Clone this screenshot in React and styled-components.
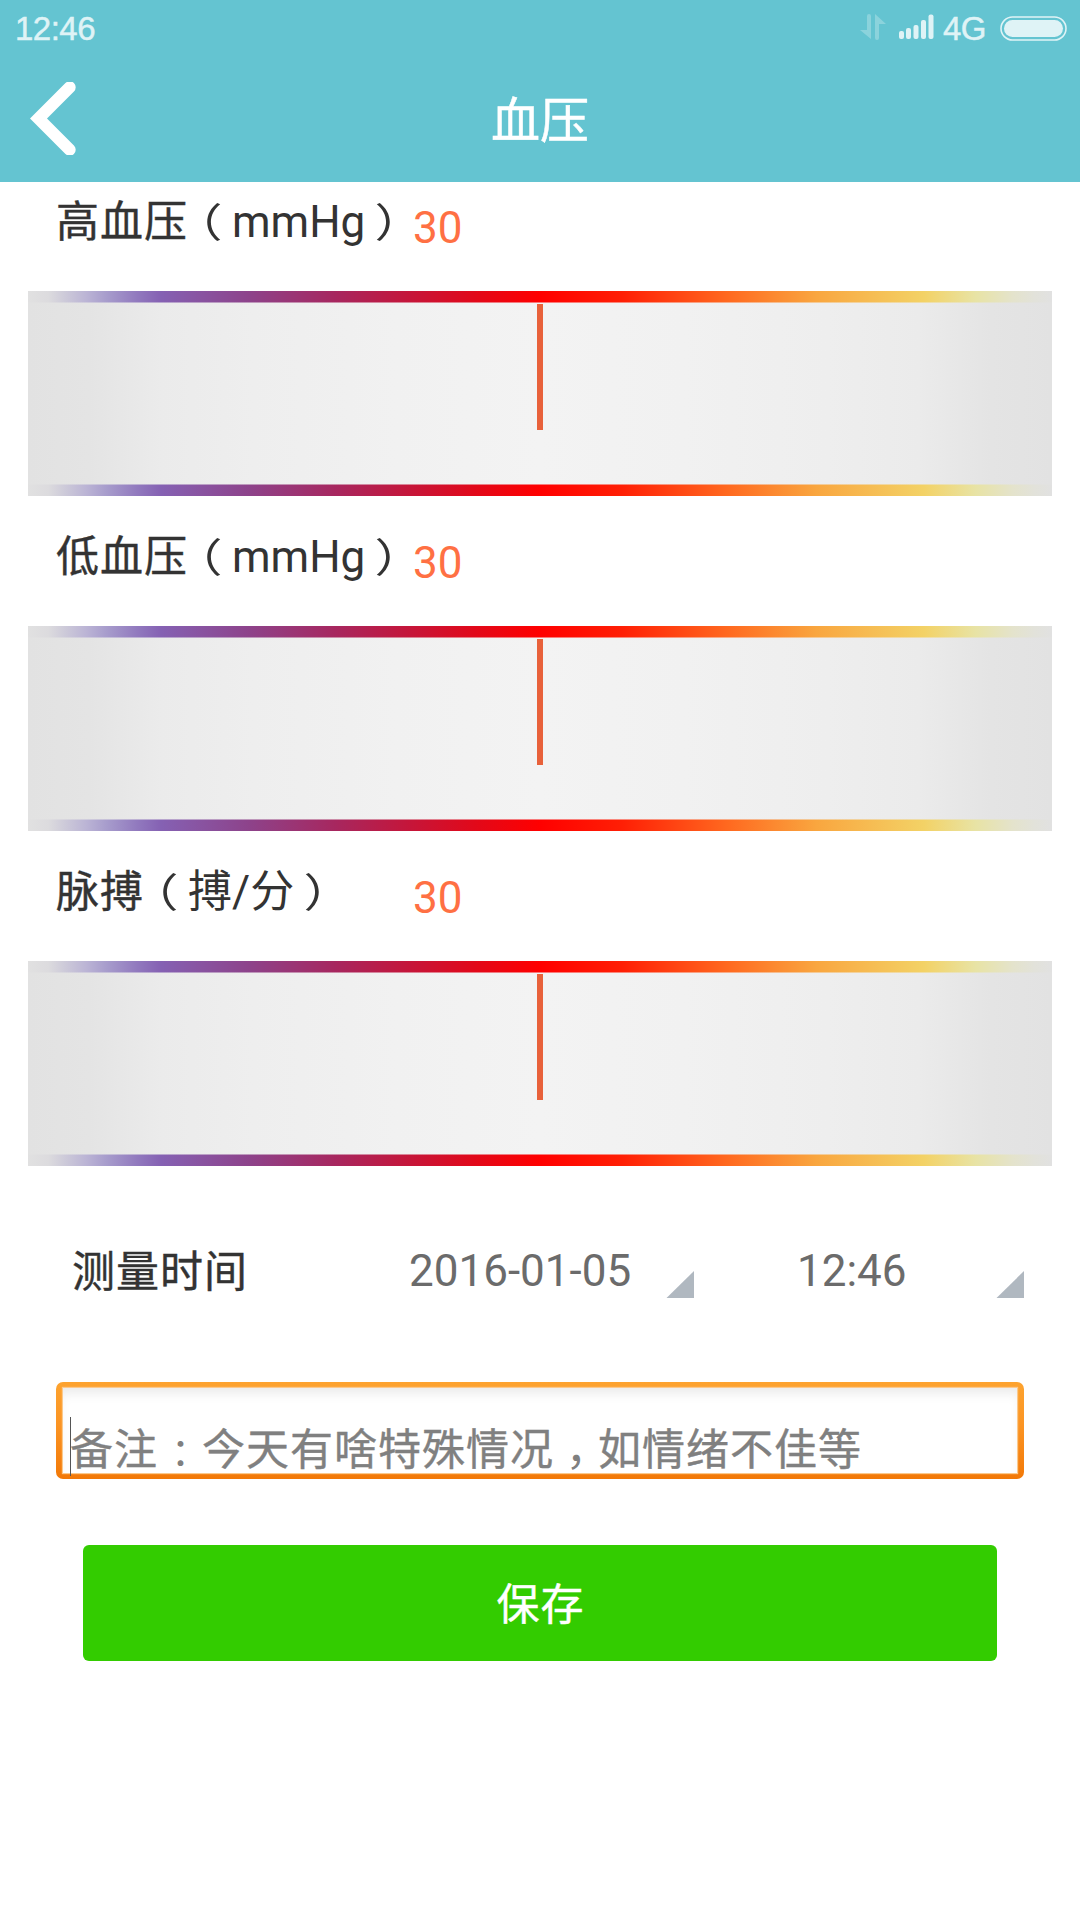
import React from "react";
import styled, { createGlobalStyle } from "styled-components";

const Global = createGlobalStyle`
  * { box-sizing: border-box; }
  body {
    margin: 0;
    background: #fff;
    font-family: Roboto, "Noto Sans CJK SC", sans-serif;
  }
`;

const Screen = styled.div`
  width: 1080px;
  height: 1920px;
  display: flex;
  flex-direction: column;
  background: #fff;
  overflow: hidden;
`;

const Header = styled.header`
  height: 182px;
  flex: none;
  background: #64c4d1;
`;

const StatusBar = styled.div`
  height: 56px;
  padding: 0 13px 0 15px;
  display: flex;
  align-items: center;
  justify-content: space-between;
  font: 33px/56px "Liberation Sans", Arial, sans-serif;
  letter-spacing: -0.5px;
  -webkit-text-stroke: 0.5px #dff3f6;
  color: #dff3f6;
`;

const Clock = styled.span`
  padding-top: 1px;
`;

const StatusIcons = styled.div`
  display: flex;
  align-items: center;
`;

const Network = styled.span`
  width: 57px;
  padding-top: 1px;
  text-align: left;
`;

const TitleBar = styled.div`
  height: 126px;
  display: grid;
  grid-template-columns: 90px 1fr 90px;
  align-items: center;
`;

const BackButton = styled.button`
  height: 126px;
  padding: 0 0 1px 30px;
  border: 0;
  background: none;
  display: flex;
  align-items: center;
`;

const Title = styled.h1`
  margin: 6px 0 0;
  font-size: 49px;
  line-height: 72px;
  font-weight: 400;
  text-align: center;
  color: #fff;
  -webkit-text-stroke: 0.5px #fff;
`;

const Reading = styled.section`
  height: 335px;
  flex: none;
  padding: 0 28px;
`;

const ReadingHead = styled.div`
  height: 109px;
  display: flex;
  padding-left: 28px;
`;

const Label = styled.div`
  width: 357px;
  height: 64px;
  margin-top: 8px;
  display: flex;
  font-size: 44px;
  line-height: 64px;
  color: #333;
  white-space: nowrap;
`;

const Han = styled.span`
  font-size: 43px;
  letter-spacing: 1px;
  -webkit-text-stroke: 0.4px currentColor;
`;

const Paren = styled.span`
  width: 44px;
  padding-top: 2px;
  display: flex;
  justify-content: center;
  font-size: 40px;
  font-feature-settings: "halt";
  transform: scaleX(1.25);
`;

const Value = styled.div`
  margin-top: 20px;
  font-size: 44px;
  line-height: 52px;
  color: #ff7043;
`;

const Gauge = styled.div`
  height: 205px;
  display: flex;
  flex-direction: column;
  align-items: center;
  background: linear-gradient(
    90deg,
    #e2e2e2 0%,
    #e4e4e4 6%,
    #ebebeb 13%,
    #eeeeee 22%,
    #f1f1f1 36%,
    #f3f3f3 50%,
    #f1f1f1 64%,
    #eeeeee 78%,
    #ebebeb 87%,
    #e4e4e4 94%,
    #e2e2e2 100%
  );
`;

const Spectrum = styled.div`
  width: 100%;
  height: 12px;
  flex: none;
  mask-image: linear-gradient(
    ${(p) => (p.$fade === "up" ? "0deg" : "180deg")},
    #000 11px,
    rgba(0, 0, 0, 0.5) 11px
  );
  background: linear-gradient(
    90deg,
    #e1e1e1 0%,
    #dcdbde 2%,
    #cdcad9 3.6%,
    #bbb4d5 5.7%,
    #a79ccc 7.7%,
    #9179be 10.7%,
    #8561b3 13%,
    #8d438b 21.5%,
    #a7275f 30%,
    #c4163b 37%,
    #e30818 44%,
    #ff0000 50%,
    #ff1f05 58%,
    #ff6a20 68.5%,
    #f9a63f 77%,
    #f3d266 87.5%,
    #e8e3a4 92.5%,
    #e4e3cc 96.2%,
    #e2e2da 98.3%,
    #e1e1e1 100%
  );
`;

const Needle = styled.div`
  width: 6px;
  height: 126px;
  margin: 1px 0 auto;
  background: #e8613a;
`;

const TimeRow = styled.div`
  height: 100px;
  margin: 33px 56px 0;
  padding-left: 16px;
  flex: none;
  display: grid;
  grid-template-columns: 336px 286px 44px 286px;
  font-size: 44px;
  line-height: 64px;
  color: #333;
`;

const RowLabel = styled.div`
  padding-top: 20px;
`;

const Picker = styled.div`
  height: 78px;
  display: flex;
  justify-content: space-between;
  align-items: flex-end;
  padding-left: ${(p) => p.$indent}px;
  color: #6b6b6b;
`;

const PickerValue = styled.span`
  height: 64px;
  line-height: 64px;
  margin-bottom: -5px;
`;

const Note = styled.div`
  height: 97px;
  margin: 62px 56px 0;
  padding: 6px 7px;
  flex: none;
  border-radius: 7px;
  background: linear-gradient(180deg, #fda32f 0%, #fb9423 45%, #f27807 100%);
`;

const NoteField = styled.div`
  height: 85px;
  padding: 29px 0 0 7px;
  display: flex;
  align-items: flex-start;
  background: #fff;
  box-shadow: inset 0 9px 12px -4px #eaeaea, 0 0 1px 1px #fbc98c;
  font-size: 44px;
  line-height: 66px;
  color: #808080;
  white-space: nowrap;
`;

const Caret = styled.i`
  width: 1px;
  height: 59px;
  margin-right: -1px;
  background: #555;
`;

const Mark = styled.span`
  width: 44px;
  padding: ${(p) => p.$drop || 0}px 0 0 1px;
  font-size: ${(p) => p.$size}px;
  text-align: center;
  font-feature-settings: "halt";
`;

const SaveButton = styled.button`
  height: 116px;
  margin: 66px 83px 0;
  padding: 4px 0 0 1px;
  flex: none;
  border: 0;
  border-radius: 6px;
  background: #33cc00;
  color: #fff;
  font: 44px/112px Roboto, "Noto Sans CJK SC", sans-serif;
`;

const Corner = () => (
  <svg width="28" height="28" viewBox="0 0 28 28">
    <path d="M28 1V28H0.5Z" fill="#b0b8c0" />
  </svg>
);

const readings = [
  { id: "high", before: "高血压", inside: "mmHg", value: 30 },
  { id: "low", before: "低血压", inside: "mmHg", value: 30 },
  { id: "pulse", before: "脉搏", inside: "搏/分", value: 30 },
];

export default function App() {
  return (
    <Screen>
      <Global />
      <Header>
        <StatusBar>
          <Clock>12:46</Clock>
          <StatusIcons>
            <svg width="83" height="30" viewBox="0 0 83 30">
              <path d="M7 3q0-2 2-2t2 2v23L0 17h7Z M15 25q0 2 2 2t2-2V11h7L15 1Z" fill="#8bd3dc" />
              <g fill="#dff3f6">
                <rect x="39" y="18" width="5" height="8" rx="2" />
                <rect x="46" y="15" width="5" height="11" rx="2" />
                <rect x="53.5" y="12" width="5" height="14" rx="2" />
                <rect x="61" y="7" width="5" height="19" rx="2" />
                <rect x="68.5" y="1.5" width="5" height="24.5" rx="2" />
              </g>
            </svg>
            <Network>4G</Network>
            <svg width="67" height="25" viewBox="0 0 67 25">
              <rect x="1" y="1" width="65" height="23" rx="11.5" fill="none" stroke="#dff3f6" strokeWidth="1.6" />
              <rect x="4" y="4" width="59" height="17" rx="8.5" fill="#dff3f6" />
            </svg>
          </StatusIcons>
        </StatusBar>
        <TitleBar>
          <BackButton aria-label="返回">
            <svg width="47" height="73" viewBox="0 0 47 73">
              <path d="M39.7 5.3L8.5 36.5L39.7 67.7" fill="none" stroke="#fff" strokeWidth="12" strokeLinecap="round" strokeLinejoin="miter" />
            </svg>
          </BackButton>
          <Title>血压</Title>
        </TitleBar>
      </Header>
      {readings.map((r) => (
        <Reading key={r.id}>
          <ReadingHead>
            <Label>
              <Han>{r.before}</Han>
              <Paren>（</Paren>
              {r.inside}
              <Paren>）</Paren>
            </Label>
            <Value>{r.value}</Value>
          </ReadingHead>
          <Gauge>
            <Spectrum $fade="down" />
            <Needle />
            <Spectrum $fade="up" />
          </Gauge>
        </Reading>
      ))}
      <TimeRow>
        <RowLabel>
          <Han>测量时间</Han>
        </RowLabel>
        <Picker $indent={1}>
          <PickerValue>2016-01-05</PickerValue>
          <Corner />
        </Picker>
        <span />
        <Picker $indent={59}>
          <PickerValue>12:46</PickerValue>
          <Corner />
        </Picker>
      </TimeRow>
      <Note>
        <NoteField>
          <Caret />
          <Han>备注</Han>
          <Mark $size={38} $drop={2}>：</Mark>
          <Han>今天有啥特殊情况</Han>
          <Mark $size={44}>，</Mark>
          <Han>如情绪不佳等</Han>
        </NoteField>
      </Note>
      <SaveButton>
        <Han>保存</Han>
      </SaveButton>
    </Screen>
  );
}
